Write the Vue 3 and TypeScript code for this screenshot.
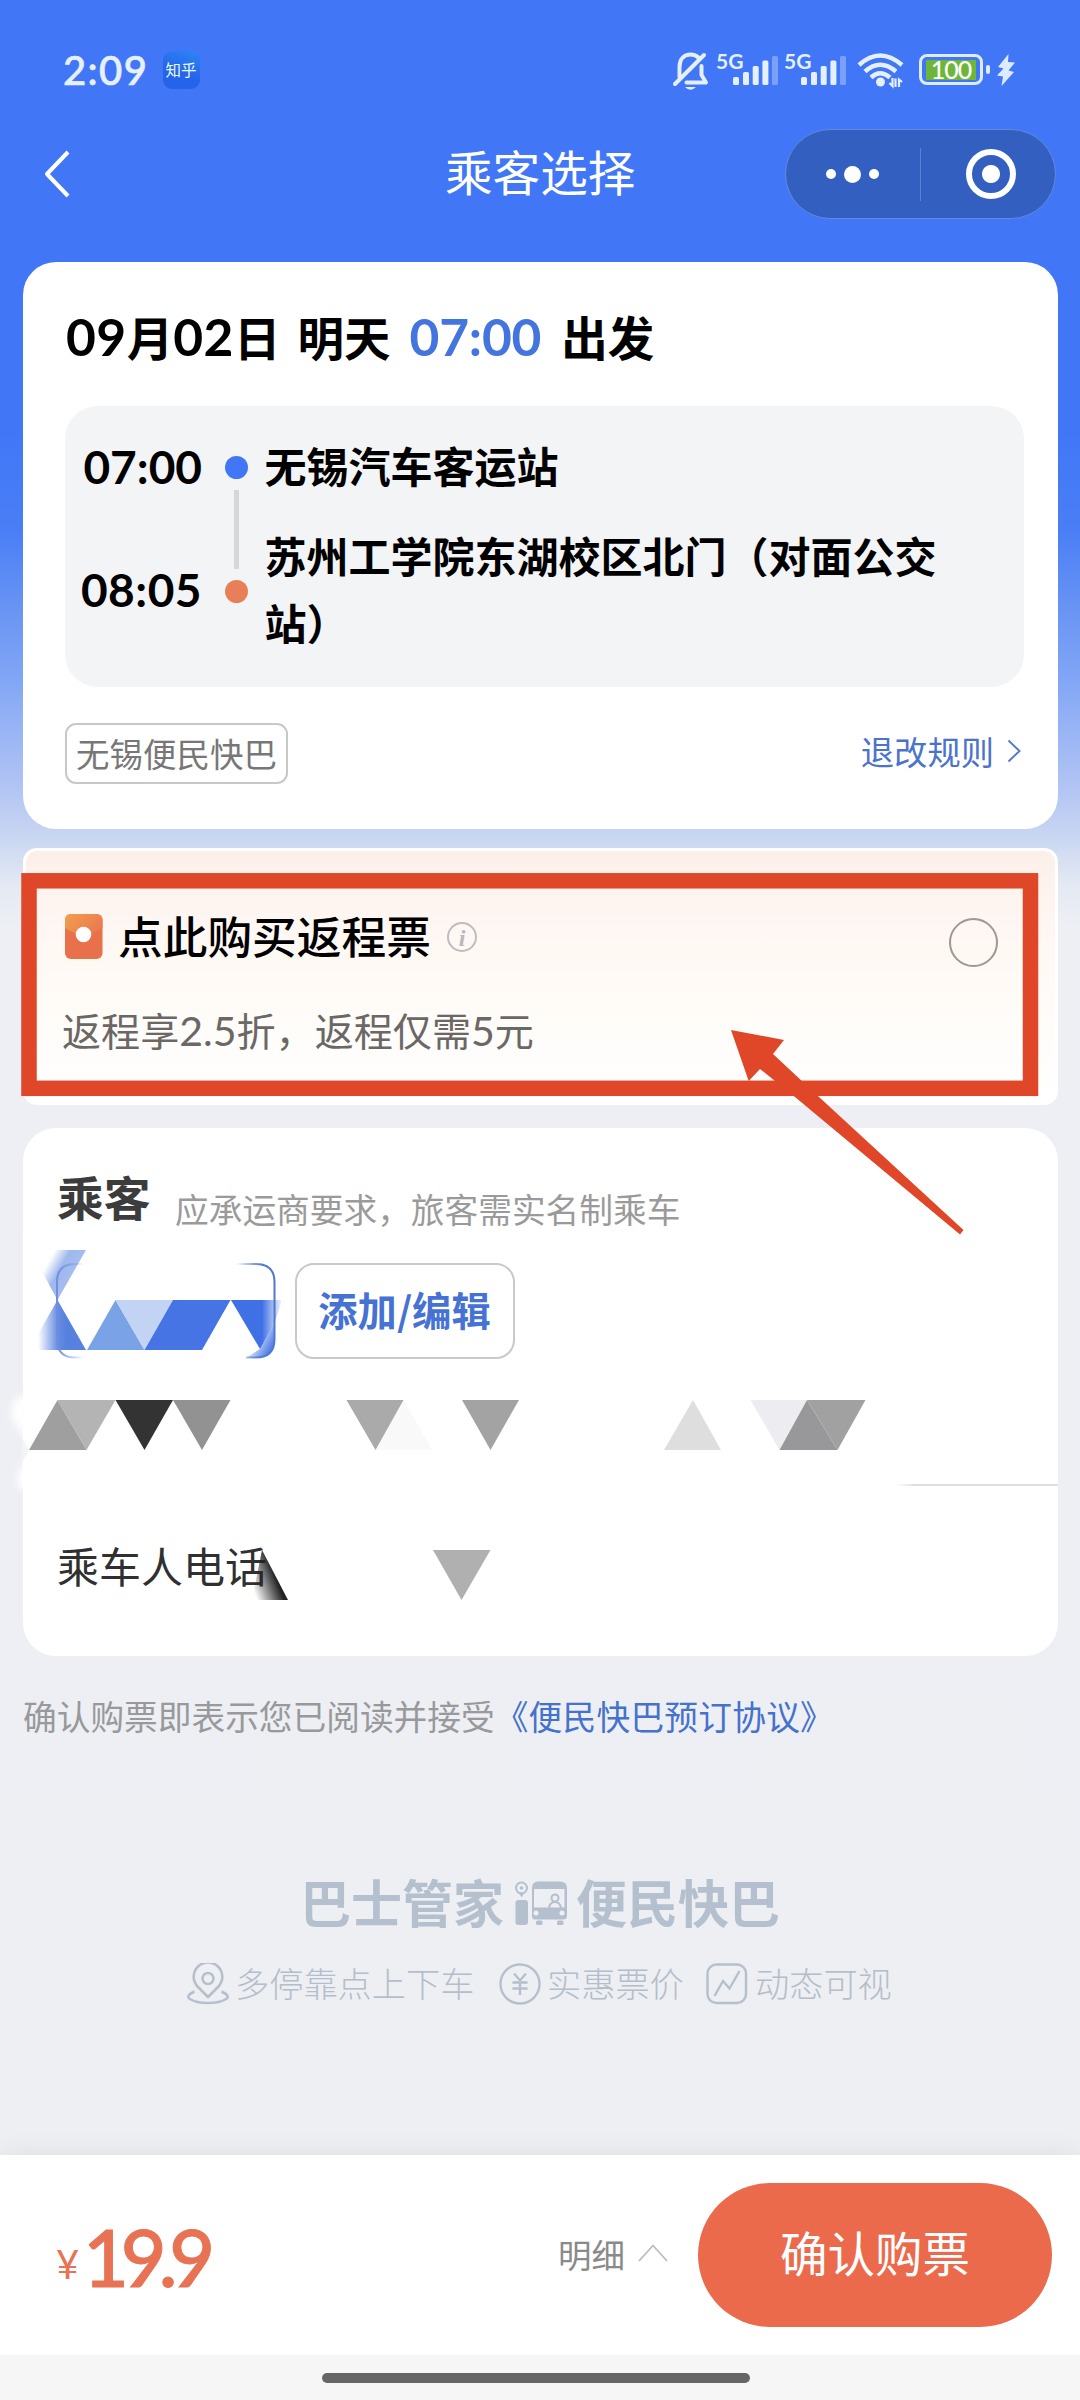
<script setup lang="ts">
interface Stop {
  time: string
  name: string
}

interface Shard {
  points: string
  fill: string
}

const departure: Stop = { time: '07:00', name: '无锡汽车客运站' }
const arrival: Stop = { time: '08:05', name: '苏州工学院东湖校区北门（对面公交站）' }

const bars = [
  { x: 0, h: 8 },
  { x: 10, h: 13 },
  { x: 19.7, h: 19 },
  { x: 29.4, h: 24.5 },
  { x: 39, h: 29 },
]

const shards: Shard[] = [
  { points: '115.5,1300 144.5,1350 87,1350', fill: '#79a3e6' },
  { points: '115.5,1300 173,1300 144.5,1350', fill: '#c3d3f4' },
  { points: '173,1300 230.5,1300 202,1350 144.5,1350', fill: '#4674e4' },
  { points: '57.5,1400 86.5,1450 29,1450', fill: '#9f9f9f' },
  { points: '57.5,1400 115.5,1400 86.5,1450', fill: '#b4b4b4' },
  { points: '115.5,1400 173,1400 144.5,1450', fill: '#333333' },
  { points: '173,1400 230.5,1400 202,1450', fill: '#929292' },
  { points: '403.5,1400 432,1450 375.5,1450', fill: '#f9f9f9' },
  { points: '346.5,1400 403.5,1400 375.5,1450', fill: '#aaaaaa' },
  { points: '462,1400 519,1400 490.5,1450', fill: '#a3a3a3' },
  { points: '693,1400 721,1450 664,1450', fill: '#dedede' },
  { points: '750.5,1400 807,1400 779.5,1450', fill: '#ededf1' },
  { points: '807,1400 837.5,1450 779.5,1450', fill: '#98989b' },
  { points: '807,1400 865.5,1400 837.5,1450', fill: '#a1a1a1' },
  { points: '433,1550 490.5,1550 461.5,1600', fill: '#b0b0b0' },
]
</script>

<template>
  <div class="screen">
    <div class="status">
      <span class="clock">2:09</span>
      <span class="app-badge">知乎</span>
      <div class="status-icons">
        <svg class="bell" width="38" height="40" viewBox="0 0 38 40" fill="none" stroke="#e4efff" stroke-width="4" stroke-linecap="round">
          <path d="M7.500 26 V16 C7.500 8 12 3.500 18.500 3.500 C22 3.500 25 5 27 7" />
          <path d="M29.500 15 V24 L34 31.500 H14.500" stroke-linejoin="round" />
          <path d="M32 4 L3 33" />
          <path d="M13 36 H24 Q18.500 41.500 13 36Z" fill="#e4efff" stroke="none" />
        </svg>
        <div v-for="n in 2" :key="n" class="signal">
          <span class="net">5G</span>
          <svg width="45.500" height="29" viewBox="0 0 45.500 29">
            <rect
              v-for="(b, i) in bars"
              :key="i"
              :x="b.x"
              :y="29 - b.h"
              width="6"
              :height="b.h"
              rx="1.500"
              fill="#e4efff"
              :opacity="i === 4 ? 0.35 : 1"
            />
          </svg>
        </div>
        <svg class="wifi" width="48" height="38" viewBox="0 0 48 38" fill="none" stroke="#e4efff" stroke-width="4.500">
          <path d="M2 14 Q23 -5 45 14" />
          <path d="M8 20.500 Q23 7 39 20.500" />
          <path d="M14 26.500 Q23 18 33 26.500" />
          <circle cx="23.500" cy="31" r="4.500" fill="#e4efff" stroke="none" />
          <path d="M35.500 27 V35 L32.500 32 M38.500 36 V27.500 M42 36 V28.500 L45 31" stroke-width="2.200" />
        </svg>
        <div class="battery">
          <span class="cell">100</span>
          <i class="nub"></i>
        </div>
        <svg class="bolt" width="18" height="32" viewBox="0 0 18 32">
          <path d="M11.500 0 L1 13 L6.500 14.500 L0 21.500 L6 22.500 L4.500 32 L17 18 L11.500 16.500 L18 8.500 L11 8Z" fill="#dcebff" />
        </svg>
      </div>
    </div>

    <header class="nav">
      <svg class="back" width="28" height="48" viewBox="0 0 28 48" fill="none" stroke="#fff" stroke-width="4">
        <path d="M25 2 L4 24 L25 46" stroke-linejoin="round" />
      </svg>
      <h1>乘客选择</h1>
      <div class="capsule">
        <i class="dot small"></i><i class="dot big"></i><i class="dot small"></i>
        <i class="sep"></i>
        <i class="target"></i>
      </div>
    </header>

    <section class="card trip">
      <h2>
        <b class="num">09</b>月<b class="num">02</b>日<span class="gap"></span>明天<b class="num hl">07:00</b>出发
      </h2>
      <div class="route">
        <b class="time">{{ departure.time }}</b>
        <i class="pin from"></i>
        <p>{{ departure.name }}</p>
        <span></span>
        <i class="link"></i>
        <span></span>
        <b class="time late">{{ arrival.time }}</b>
        <i class="pin to"></i>
        <p class="dest">{{ arrival.name }}</p>
      </div>
      <div class="meta">
        <span class="tag">无锡便民快巴</span>
        <a class="rules">
          退改规则
          <svg width="14" height="24" viewBox="0 0 14 24" fill="none" stroke="#5a7cc8" stroke-width="2">
            <path d="M1.500 1.500 L12.500 12 L1.500 22.500" />
          </svg>
        </a>
      </div>
    </section>

    <section class="card return">
      <div class="return-main">
        <div class="return-title">
          <svg class="packet" width="38" height="46" viewBox="0 0 38 46">
            <defs>
              <linearGradient id="flap" x1="0" y1="0" x2="1" y2="0.600">
                <stop offset="0" stop-color="#f2a04e" />
                <stop offset="1" stop-color="#ea7a4e" />
              </linearGradient>
            </defs>
            <rect width="37.500" height="45" rx="6" fill="#e8704b" />
            <path d="M0 14 V6 Q0 0 6 0 H31.500 Q37.500 0 37.500 6 V14 Q19 27 0 14Z" fill="url(#flap)" />
            <circle cx="18.500" cy="20.500" r="7.800" fill="#fff" />
          </svg>
          <strong>点此购买返程票</strong>
          <svg class="info" width="32" height="32" viewBox="0 0 32 32">
            <circle cx="16" cy="16" r="14" fill="none" stroke="#bfbcbc" stroke-width="2" />
            <text x="16" y="24.500" text-anchor="middle" class="info-i">i</text>
          </svg>
        </div>
        <p class="offer">返程享<span class="lat">2.5</span>折，返程仅需<span class="lat">5</span>元</p>
      </div>
      <i class="radio"></i>
    </section>

    <section class="card people">
      <div class="people-head">
        <h3>乘客</h3>
        <span>应承运商要求，旅客需实名制乘车</span>
      </div>
      <button class="edit">添加/编辑</button>
      <div class="rule"></div>
      <div class="phone">乘车人电话</div>
    </section>

    <p class="agree">确认购票即表示您已阅读并接受<a>《便民快巴预订协议》</a></p>

    <footer class="brand">
      <div class="brand-name">
        <span>巴士管家</span>
        <svg width="54" height="46" viewBox="0 0 54 46">
          <g fill="none" stroke="#b4c0ce" stroke-width="2">
            <circle cx="7.500" cy="7" r="5.500" />
          </g>
          <circle cx="7.500" cy="7" r="1.800" fill="#b4c0ce" />
          <path d="M4.500 11.500 L7.500 16.500 L10.500 11.500Z" fill="#b4c0ce" />
          <rect x="1.500" y="19" width="12.500" height="25" rx="3" fill="#b4c0ce" />
          <path fill-rule="evenodd" d="M24 0.500 H46 Q53 0.500 53 7 V35 Q53 38.500 49 38.500 H21 Q18 38.500 18 35 V7 Q18 0.500 24 0.500Z M20 8 V26.500 H50.500 V8Z" fill="#b4c0ce" />
          <circle cx="22" cy="32" r="2.500" fill="#edf0f4" />
          <circle cx="48" cy="32" r="2.500" fill="#edf0f4" />
          <circle cx="41" cy="17" r="3.500" fill="none" stroke="#b4c0ce" stroke-width="2" />
          <path d="M35 27 Q36 21 41 21 Q46 21 47 27" fill="none" stroke="#b4c0ce" stroke-width="2" />
          <rect x="22" y="39.500" width="6.500" height="4.500" rx="1.500" fill="#b4c0ce" />
          <rect x="43" y="39.500" width="6.500" height="4.500" rx="1.500" fill="#b4c0ce" />
        </svg>
        <span class="wide">便民快巴</span>
      </div>
      <div class="features">
        <svg width="44" height="42" viewBox="0 0 44 42" fill="none" stroke="#b6c0cc" stroke-width="2.600">
          <path d="M22 34 L11.500 23.500 A14.300 14.300 0 1 1 32.500 23.500 Z" stroke-linejoin="round" />
          <circle cx="22" cy="15.500" r="5.500" />
          <path d="M8.500 28.500 Q-1 33 4 36 Q10 40 22 40 Q34 40 40 36 Q45 33 35.500 28.500" />
        </svg>
        <span class="f1">多停靠点上下车</span>
        <svg width="42" height="42" viewBox="0 0 42 42" fill="none" stroke="#b6c0cc" stroke-width="2.400">
          <circle cx="21" cy="21" r="19.500" />
          <path d="M15 10.500 L21 17.500 L27 10.500 M21 17.500 V32 M13.500 19.500 H28.500 M13.500 25.500 H28.500" />
        </svg>
        <span class="f2">实惠票价</span>
        <svg width="42" height="42" viewBox="0 0 42 42" fill="none" stroke="#b6c0cc" stroke-width="2.400">
          <rect x="1.500" y="1.500" width="38.500" height="38.500" rx="9" />
          <path d="M8.500 33 L17 18 L23.500 25.500 L33.500 8" />
        </svg>
        <span class="f3">动态可视</span>
      </div>
    </footer>

    <div class="pay">
      <div class="price"><span class="yen">¥</span><span class="amount">19.9</span></div>
      <span class="detail">明细</span>
      <svg class="caret" width="30" height="18" viewBox="0 0 30 18" fill="none" stroke="#bdbdbd" stroke-width="1.800">
        <path d="M1 17 L15 1.500 L29 17" />
      </svg>
      <button class="confirm">确认购票</button>
    </div>
    <div class="home"><i></i></div>

    <!-- privacy mosaic and hand-drawn callout lying over the page -->
    <svg class="overlay" width="1080" height="2400" viewBox="0 0 1080 2400">
      <defs>
        <linearGradient id="fadeA" gradientUnits="userSpaceOnUse" x1="47" y1="1264" x2="74" y2="1279">
          <stop offset="0" stop-color="#8eabea" stop-opacity="0" />
          <stop offset="0.450" stop-color="#8eabea" stop-opacity="0.850" />
          <stop offset="1" stop-color="#a9bfee" />
        </linearGradient>
        <linearGradient id="fadeB" gradientUnits="userSpaceOnUse" x1="38" y1="0" x2="66" y2="0">
          <stop offset="0" stop-color="#5781df" stop-opacity="0" />
          <stop offset="0.700" stop-color="#5781df" stop-opacity="0.900" />
          <stop offset="1" stop-color="#5781df" />
        </linearGradient>
        <linearGradient id="fadeC" gradientUnits="userSpaceOnUse" x1="262" y1="0" x2="282" y2="0">
          <stop offset="0" stop-color="#3f70e6" />
          <stop offset="1" stop-color="#3f70e6" stop-opacity="0.050" />
        </linearGradient>
        <linearGradient id="fadeD" gradientUnits="userSpaceOnUse" x1="250" y1="1340" x2="272" y2="1352">
          <stop offset="0" stop-color="#3f70e6" stop-opacity="0" />
          <stop offset="1" stop-color="#3f70e6" />
        </linearGradient>
        <linearGradient id="edge" gradientUnits="userSpaceOnUse" x1="236" y1="0" x2="262" y2="0">
          <stop offset="0" stop-color="#5078cf" stop-opacity="0" />
          <stop offset="1" stop-color="#5078cf" />
        </linearGradient>
        <linearGradient id="edgeL" gradientUnits="userSpaceOnUse" x1="57" y1="0" x2="84" y2="0">
          <stop offset="0" stop-color="#6d8fdd" />
          <stop offset="1" stop-color="#6d8fdd" stop-opacity="0" />
        </linearGradient>
        <linearGradient id="ink" gradientUnits="userSpaceOnUse" x1="254" y1="1592" x2="278" y2="1583">
          <stop offset="0" stop-color="#222" stop-opacity="0" />
          <stop offset="1" stop-color="#222" />
        </linearGradient>
        <linearGradient id="hair" gradientUnits="userSpaceOnUse" x1="896" y1="0" x2="915" y2="0">
          <stop offset="0" stop-color="#dedede" stop-opacity="0" />
          <stop offset="1" stop-color="#dedede" />
        </linearGradient>
        <filter id="soft" x="-50%" y="-20%" width="200%" height="140%">
          <feGaussianBlur stdDeviation="3.500" />
        </filter>
      </defs>
      <path d="M14 1400 L27 1394 V1442 L11 1416Z M30 1450 L17 1477 L20 1490 H30Z" fill="#fff" filter="url(#soft)" />
      <path d="M22 1438 L29 1450 L22 1463Z" fill="#f3f4f6" />
      <path d="M86 1250 L57.500 1300 L40 1268 L52 1250Z" fill="url(#fadeA)" />
      <path d="M57.500 1300 L86 1350 H38 V1334Z" fill="url(#fadeB)" />
      <path d="M84 1264 H75 Q57 1264 57 1282 V1339 Q57 1357.500 75 1357.500 H84" fill="none" stroke="url(#edgeL)" stroke-width="2" />
      <polygon v-for="(s, i) in shards" :key="i" :points="s.points" :fill="s.fill" />
      <path d="M231 1300 H282 L274.500 1323 L260 1349Z" fill="url(#fadeC)" />
      <path d="M274.500 1323 V1340 Q274.500 1357.500 256 1358 H246 L260 1349Z" fill="url(#fadeD)" />
      <path d="M236 1264 H256 Q274.500 1264 274.500 1282 V1339 Q274.500 1357.500 256 1357.500 H246" fill="none" stroke="url(#edge)" stroke-width="2" />
      <path d="M262 1550 L288 1600 H252Z" fill="url(#ink)" />
      <rect x="896" y="1484" width="162" height="2" fill="url(#hair)" />
      <rect x="29" y="880.800" width="1001.500" height="207.500" fill="none" stroke="#e04729" stroke-width="15.500" />
      <path d="M731 1030 L784 1040 L773 1054 L819 1097 L963.500 1230 L960 1234.500 L795 1097 L760 1069 L748.700 1081Z" fill="#e04729" />
    </svg>
  </div>
</template>

<style>
body {
  background: #edeff3;
}
</style>

<style scoped>
* {
  box-sizing: border-box;
}
.screen {
  position: relative;
  width: 1080px;
  height: 2400px;
  overflow: hidden;
  display: flex;
  flex-direction: column;
  font-family: "Noto Sans CJK SC", sans-serif;
  background: linear-gradient(
    #4177f7 0, #4177f7 430px, #4a7ef6 530px, #6d97f4 620px, #82a6f6 680px,
    #b3c5f3 790px, #cad7f2 838px, #e4e9f3 885px, #edeff4 925px, #edeff3 100%
  );
}
h1, h2, h3, p {
  margin: 0;
}
i {
  display: block;
  flex: none;
}
svg {
  flex: none;
}
button {
  font-family: inherit;
  padding: 0;
}
.status {
  height: 129px;
  display: flex;
  align-items: flex-start;
  padding: 51px 0 0 63px;
}
.clock {
  width: 99.500px;
  font: 500 40px/38px Lato, sans-serif;
  letter-spacing: 1.400px;
  color: #e6f0ff;
  -webkit-text-stroke: 0.700px #e6f0ff;
}
.app-badge {
  width: 37px;
  height: 38px;
  border-radius: 9px;
  background: linear-gradient(200deg, #2e86f5, #2463ea 60%);
  color: #e8fbff;
  font-size: 15.500px;
  line-height: 37px;
  text-align: center;
}
.status-icons {
  margin-left: 472.500px;
  display: flex;
}
.bell {
  margin-right: 6px;
}
.signal {
  display: flex;
  align-items: flex-start;
  width: 68px;
}
.net {
  width: 16.500px;
  font: 700 21px/20px Lato, sans-serif;
  color: #e4efff;
  white-space: nowrap;
}
.signal svg {
  margin-top: 5px;
}
.wifi {
  margin-left: 5px;
}
.battery {
  display: flex;
  align-items: center;
  height: 31px;
  margin: 3px 0 0 14px;
}
.cell {
  width: 64px;
  height: 31px;
  border: 3.400px solid #dcebff;
  border-radius: 8px;
  background: linear-gradient(#6db63a, #6db63a) center / 50px 20px no-repeat;
  font: 500 25px/25px Lato, sans-serif;
  letter-spacing: -1px;
  text-align: center;
  color: #fff;
}
.nub {
  width: 4.500px;
  height: 9.500px;
  margin-left: 2.500px;
  border-radius: 2px;
  background: #dcebff;
}
.bolt {
  margin: 3px 0 0 7px;
}
.nav {
  height: 133px;
  display: flex;
  align-items: flex-start;
}
.back {
  margin: 21px 0 0 43px;
}
h1 {
  margin-left: 374px;
  width: 340px;
  font-size: 47.600px;
  font-weight: 400;
  line-height: 84px;
  color: #fff;
}
.capsule {
  width: 271px;
  height: 90px;
  border-radius: 45px;
  border: 1px solid #6389d8;
  background: #335fc0;
  display: flex;
  align-items: center;
}
.dot {
  border-radius: 50%;
  background: #fff;
}
.small {
  width: 10px;
  height: 10px;
}
.small:first-child {
  margin-left: 40px;
}
.big {
  width: 17px;
  height: 17px;
  margin: 0 8px;
}
.sep {
  width: 1px;
  height: 53px;
  margin-left: 41px;
  background: #5c82d2;
}
.target {
  width: 50px;
  height: 50px;
  margin-left: 45px;
  border-radius: 50%;
  border: 6.500px solid #fff;
  background: radial-gradient(circle, #fff 8.500px, transparent 9.500px);
}
.card {
  flex: none;
  margin-left: 23px;
  width: 1035px;
  background: #fff;
  border-radius: 33px;
}
.trip {
  height: 567px;
  padding: 40px 34px 0 42px;
}
h2 {
  display: flex;
  align-items: baseline;
  height: 104px;
  padding-left: 1px;
  font-size: 46.500px;
  font-weight: 600;
  line-height: 68px;
  color: #000;
}
.num {
  font-family: Lato, sans-serif;
  font-size: 51.500px;
  font-weight: 700;
  line-height: 1;
  letter-spacing: 0.500px;
}
.gap {
  width: 17px;
}
.hl {
  margin: 0 20px 0 19px;
  letter-spacing: -0.200px;
  color: #4474de;
}
.route {
  height: 281px;
  padding-top: 28px;
  border-radius: 33px;
  background: #f3f4f6;
  display: grid;
  grid-template-columns: 137px 69px 690px;
  grid-template-rows: 67px 23px 134px;
  align-items: center;
}
.time {
  padding-bottom: 2px;
  font: 700 46px/60px Lato, sans-serif;
  text-align: right;
  color: #000;
}
.late {
  letter-spacing: 0.500px;
}
.pin {
  width: 23px;
  height: 23px;
  margin-left: 23px;
  border-radius: 50%;
}
.from {
  background: #4177f7;
}
.to {
  background: #e97f59;
}
.link {
  align-self: start;
  width: 5px;
  height: 79px;
  margin: -11px 0 0 32px;
  background: #d6d7d9;
}
.route p {
  margin-left: -6.500px;
  padding-bottom: 7px;
  font-size: 42px;
  font-weight: 600;
  line-height: 67px;
  color: #000;
}
.meta {
  display: flex;
  justify-content: space-between;
  align-items: flex-start;
  padding-top: 36px;
}
.tag {
  height: 61px;
  padding: 0 9px;
  border: 2px solid #c8c8c8;
  border-radius: 11px;
  font-size: 33.500px;
  line-height: 56px;
  color: #777;
}
.rules {
  display: flex;
  align-items: center;
  gap: 13px;
  padding-right: 3px;
  font-size: 33.300px;
  line-height: 56px;
  color: #4b73cc;
}
.return {
  margin-top: 19px;
  height: 257px;
  border: 3px solid #fff;
  border-radius: 14px;
  background: linear-gradient(#fcefe9, #fef5f1 22%, #fffaf5 50%, #fefdfb 80%, #fff);
  display: flex;
}
.return-main {
  width: 901px;
  padding: 56px 0 0 36px;
}
.return-title {
  display: flex;
  align-items: center;
  height: 60px;
}
.packet {
  margin-left: 3px;
}
.return-title strong {
  margin: -5px 0 0 15px;
  font-size: 44.700px;
  font-weight: 500;
  line-height: 60px;
  color: #000;
}
.info {
  margin-left: 15px;
}
.info-i {
  font: italic 700 24px "Liberation Serif", serif;
  fill: #b9b7bd;
}
.offer {
  margin-top: 32px;
  font-size: 39.100px;
  line-height: 60px;
  color: #6b6765;
}
.lat {
  font-family: Lato, sans-serif;
  font-size: 41px;
  line-height: 0;
}
.radio {
  width: 49px;
  height: 49px;
  margin: 67px 0 0 22px;
  border: 2px solid #9d9892;
  border-radius: 50%;
}
.people {
  margin-top: 23px;
  height: 528px;
  padding-left: 34px;
  display: flex;
  flex-direction: column;
}
.people-head {
  display: flex;
  height: 135px;
}
h3 {
  margin-top: 33px;
  width: 118px;
  font-size: 46.800px;
  font-weight: 700;
  line-height: 70px;
  color: #3c3c3c;
}
.people-head span {
  padding-top: 46px;
  font-size: 33.700px;
  line-height: 70px;
  color: #9a9a9a;
}
.edit {
  width: 220px;
  height: 96px;
  margin-left: 238px;
  border: 2px solid #c9c9c9;
  border-radius: 19px;
  background: #fff;
  color: #4672d4;
  font-size: 39.300px;
  font-weight: 600;
  line-height: 88px;
  padding: 0 1px 4px 0;
}
.rule {
  height: 127px;
}
.phone {
  padding-top: 47px;
  font-size: 42px;
  line-height: 64px;
  color: #303030;
}
.agree {
  padding: 36px 0 0 23px;
  height: 216px;
  font-size: 33.700px;
  line-height: 48px;
  color: #98999b;
}
.agree a {
  letter-spacing: 0.250px;
  color: #4572cb;
}
.brand {
  height: 283px;
}
.brand-name {
  display: flex;
  align-items: center;
  height: 64px;
  padding-left: 300px;
  color: #b4c0ce;
  font-size: 51px;
  font-weight: 700;
  line-height: 64px;
}
.brand-name svg {
  margin: 0 8px 0 10px;
}
.brand-name span {
  margin-top: -6px;
}
.features {
  display: flex;
  align-items: center;
  height: 48px;
  margin-top: 24px;
  padding-left: 186px;
  font-size: 34.200px;
  font-weight: 300;
  line-height: 48px;
  color: #b4becb;
}
.features span {
  margin: -4px 0 0 6px;
}
.features .f1 {
  margin-left: 5px;
  width: 264px;
}
.features .f2 {
  width: 159px;
}
.features .f3 {
  margin-left: 7px;
}
.pay {
  position: relative;
  flex: none;
  height: 200px;
  display: flex;
  align-items: center;
  background: #fff;
  box-shadow: 0 0 26px rgba(0, 0, 0, 0.080);
}
.price {
  width: 502px;
  margin-left: 56px;
  padding-top: 10px;
  color: #e87254;
  display: flex;
  align-items: flex-start;
}
.yen {
  width: 27px;
  padding-top: 7px;
  font: 400 40px/80px Lato, sans-serif;
}
.amount {
  font: 500 79px/80px Lato, sans-serif;
  letter-spacing: -8px;
  -webkit-text-stroke: 1px #e87254;
}
.detail {
  width: 80px;
  padding-bottom: 3px;
  font-size: 33.500px;
  color: #8a8a8a;
}
.caret {
  margin-top: -4px;
}
.confirm {
  width: 354px;
  height: 144px;
  margin-left: 30px;
  padding-bottom: 8px;
  border: 0;
  border-radius: 72px;
  background: #ec6a4c;
  color: #fff;
  font-size: 47.500px;
  font-weight: 400;
}
.home {
  position: relative;
  flex: none;
  height: 45px;
  padding: 18px 0 0 322px;
  background: #f6f6f6;
}
.home i {
  width: 428px;
  height: 10px;
  border-radius: 5px;
  background: #666;
}
.overlay {
  position: absolute;
  left: 0;
  top: 0;
  pointer-events: none;
}
</style>
